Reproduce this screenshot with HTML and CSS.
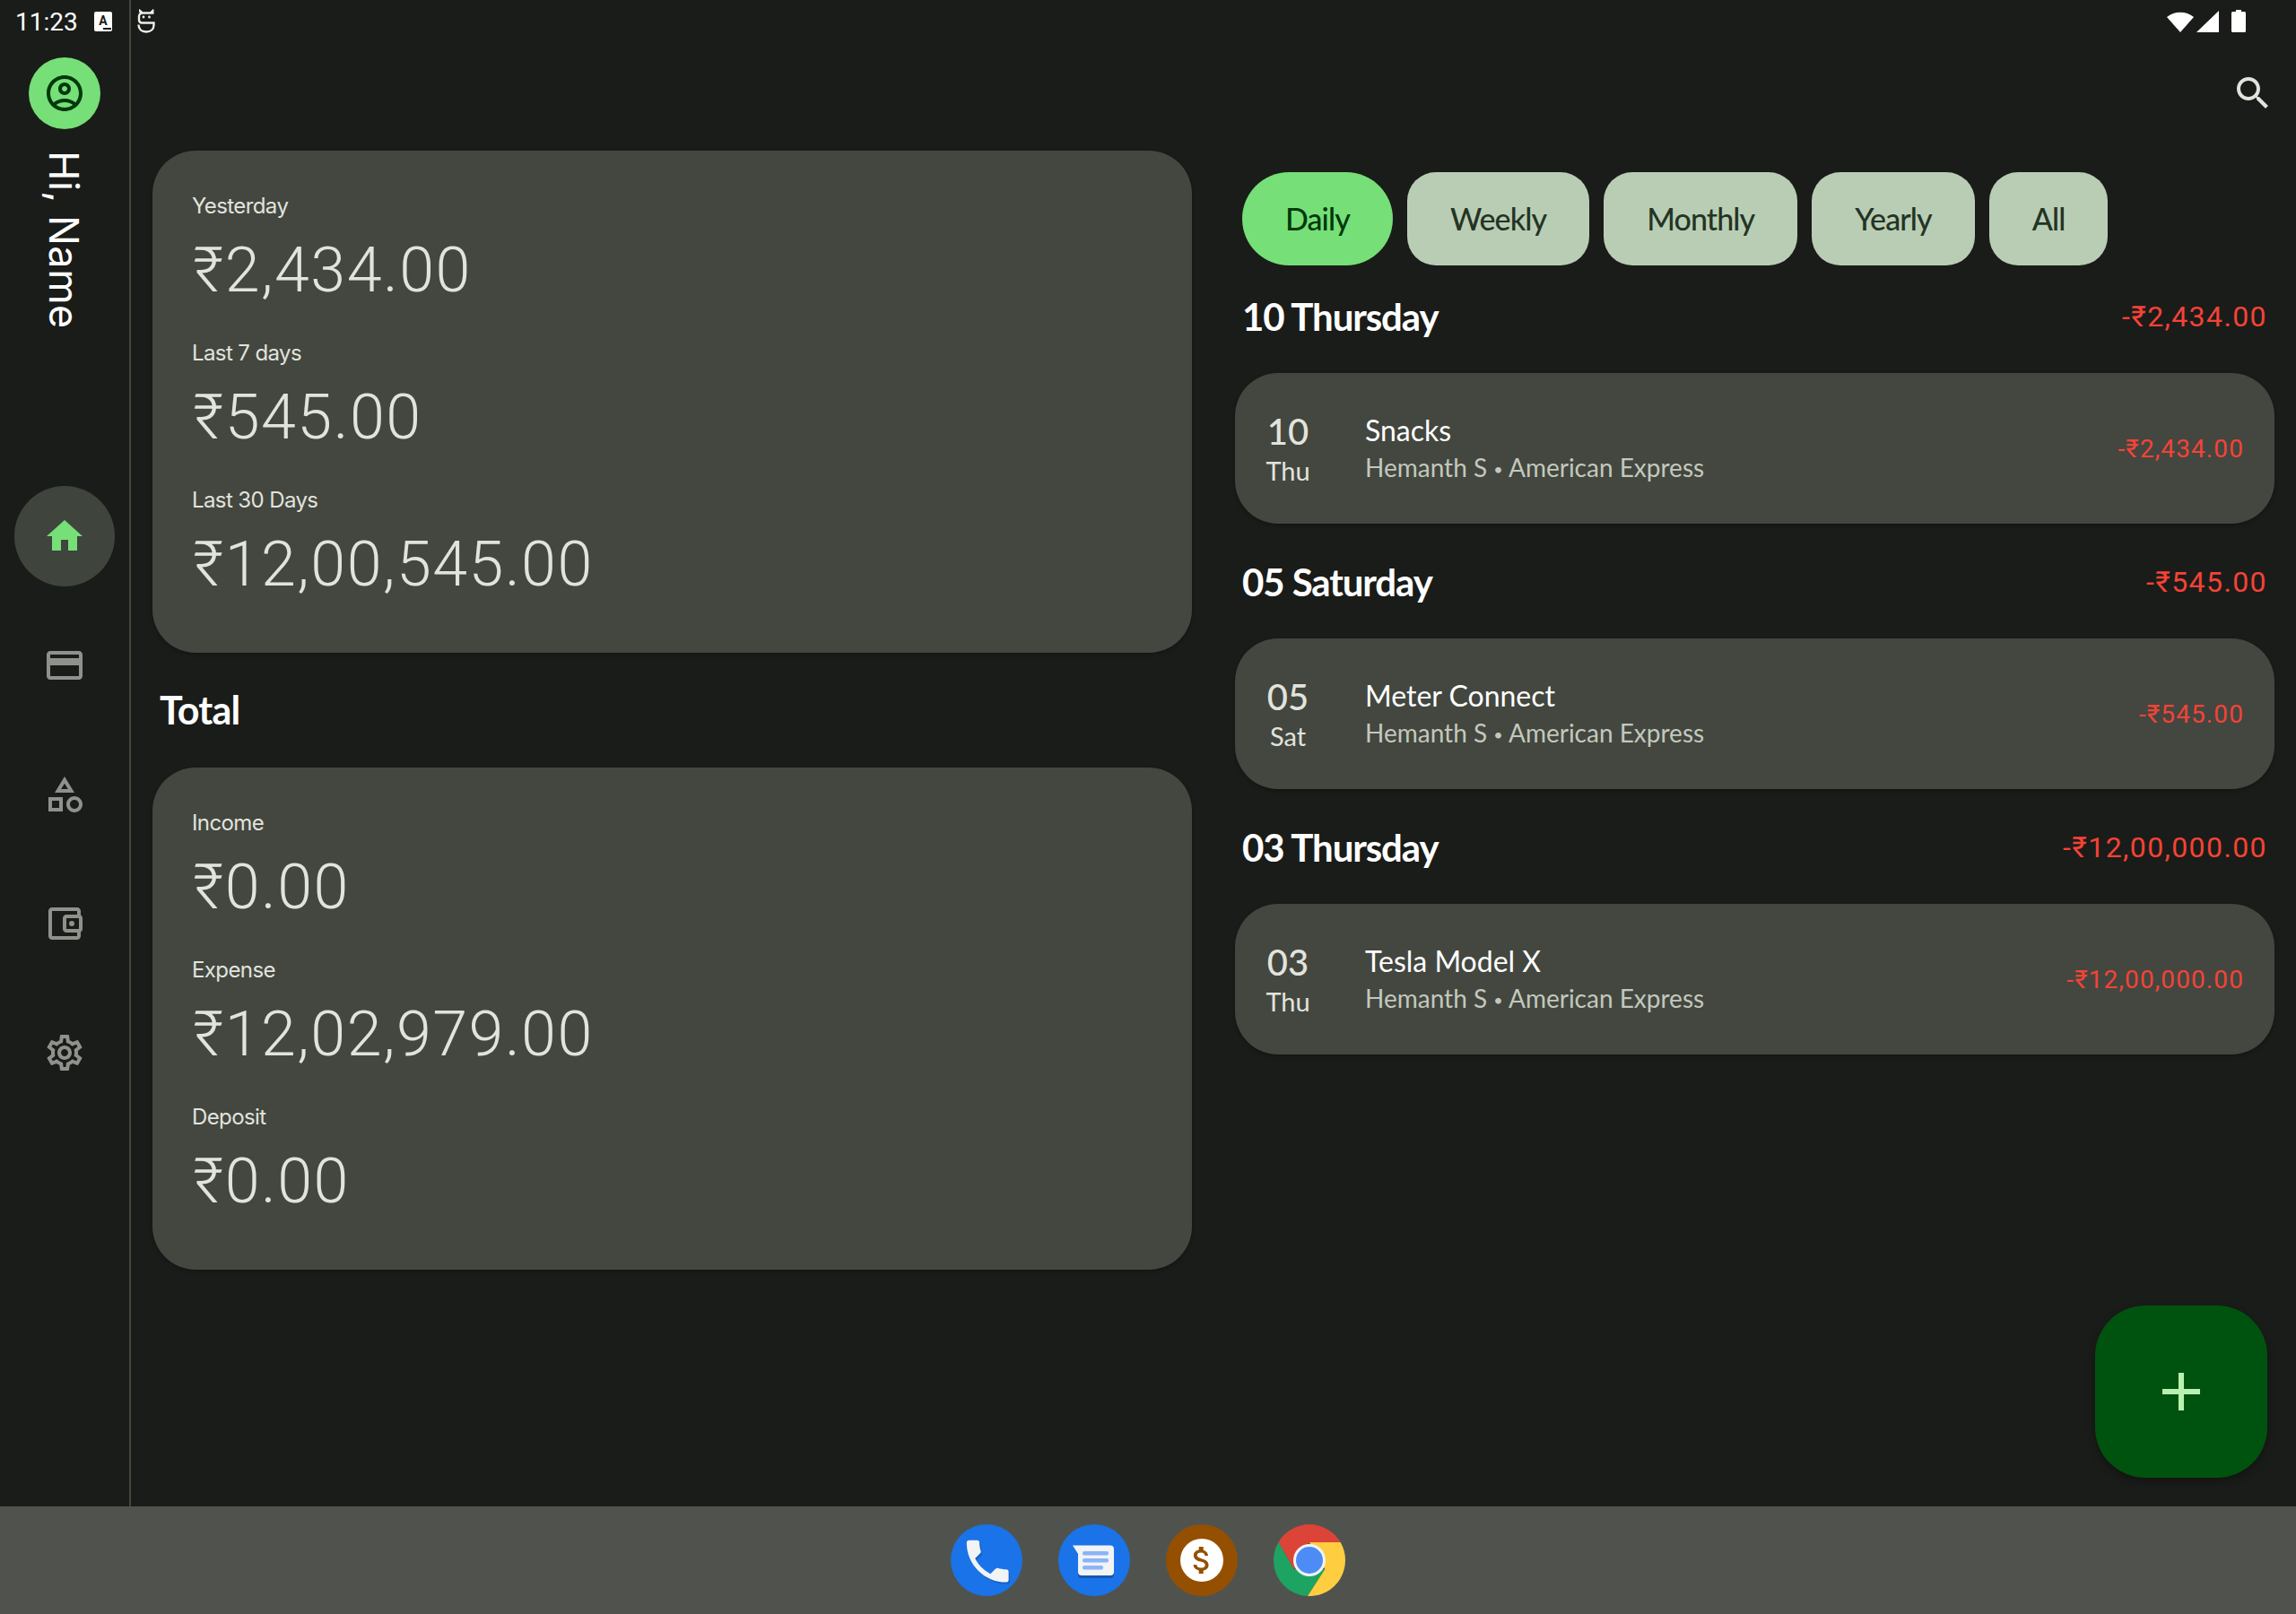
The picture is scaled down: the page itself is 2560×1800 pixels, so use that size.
FILE: index.html
```html
<!DOCTYPE html>
<html lang="en">
<head>
<meta charset="utf-8">
<title>Budget</title>
<link rel="stylesheet" href="styles.css">
</head>
<body>
<div class="screen">
  <div class="status">
    <div class="status-left">
      <span class="clock">11:23</span>
      <span class="key-icon">A<i class="dots"></i></span>
      <svg class="droid" viewBox="0 0 20 27"><path d="M18.500 4.500H6Q2 4.500 2 8.500V12Q2 15.500 5.500 15.500H18.500V18C18.500 22.500 15 25.500 10 25.500C5 25.500 1.500 22.500 1.500 17.500" fill="none" stroke="#ecece9" stroke-width="2.400"/><path d="M2.500 0.500L6 3.500H2.500ZM18 0.500L14.500 3.500H18Z" fill="#ecece9" stroke="#ecece9"/><circle cx="7" cy="9" r="1.400" fill="#ecece9"/><circle cx="13.500" cy="9" r="1.400" fill="#ecece9"/></svg>
    </div>
    <div class="status-right">
      <svg class="wifi" viewBox="0 0 30 25"><path d="M15 25L0 8A24 24 0 0 1 30 8Z" fill="#fff"/></svg>
      <svg class="signal" viewBox="0 0 25 24"><path d="M0 24L25 0V24Z" fill="#fff"/></svg>
      <svg class="battery" viewBox="0 0 16 25"><path d="M5 0H11V2H14.500A1.500 1.500 0 0 1 16 3.500V23.500A1.500 1.500 0 0 1 14.500 25H1.500A1.500 1.500 0 0 1 0 23.500V3.500A1.500 1.500 0 0 1 1.500 2H5Z" fill="#fff"/></svg>
    </div>
  </div>

  <div class="main">
    <aside class="rail">
      <div class="avatar"><svg class="icon" viewBox="0 0 24 24"><path d="M12 2C6.480 2 2 6.480 2 12s4.480 10 10 10 10-4.480 10-10S17.520 2 12 2zM7.350 18.500C8.660 17.560 10.260 17 12 17s3.340.56 4.650 1.500c-1.310.94-2.910 1.500-4.650 1.500s-3.340-.56-4.650-1.500zm10.790-1.380C16.450 15.800 14.320 15 12 15s-4.450.8-6.140 2.120C4.700 15.730 4 13.950 4 12c0-4.420 3.580-8 8-8s8 3.580 8 8c0 1.950-.7 3.730-1.860 5.120zM12 6c-1.930 0-3.500 1.570-3.500 3.500S10.070 13 12 13s3.500-1.570 3.500-3.500S13.930 6 12 6zm0 5c-.83 0-1.500-.67-1.500-1.500S11.170 8 12 8s1.500.67 1.500 1.500S12.830 11 12 11z"/></svg></div>
      <div class="greeting">Hi, Name</div>
      <nav class="rail-nav">
        <div class="rail-item active"><svg class="icon" viewBox="0 0 24 24"><path d="M10 20v-6h4v6h5v-8h3L12 3 2 12h3v8z"/></svg></div>
        <div class="rail-item"><svg class="icon" viewBox="0 0 24 24"><path d="M20 4H4c-1.110 0-1.990.89-1.990 2L2 18c0 1.110.89 2 2 2h16c1.110 0 2-.89 2-2V6c0-1.110-.89-2-2-2zm0 14H4v-6h16v6zm0-10H4V6h16v2z"/></svg></div>
        <div class="rail-item"><svg class="icon" viewBox="0 0 24 24"><path d="M12 2l-5.500 9h11L12 2zm0 3.840L13.930 9h-3.870L12 5.840zM17.500 13c-2.490 0-4.500 2.010-4.500 4.500s2.010 4.500 4.500 4.500 4.500-2.010 4.500-4.500-2.010-4.500-4.500-4.500zm0 7c-1.380 0-2.500-1.120-2.500-2.500s1.120-2.500 2.500-2.500 2.500 1.120 2.500 2.500-1.120 2.500-2.500 2.500zM3 21.500h8v-8H3v8zm2-6h4v4H5v-4z"/></svg></div>
        <div class="rail-item"><svg class="icon" viewBox="0 0 24 24"><path d="M21 7.280V5c0-1.100-.9-2-2-2H5c-1.110 0-2 .9-2 2v14c0 1.100.89 2 2 2h14c1.100 0 2-.9 2-2v-2.280c.59-.35 1-.98 1-1.720V9c0-.74-.41-1.370-1-1.720zM20 9v6h-7V9h7zM5 19V5h14v2h-6c-1.100 0-2 .9-2 2v6c0 1.100.9 2 2 2h6v2H5z"/><circle cx="16" cy="12" r="1.500"/></svg></div>
        <div class="rail-item"><svg class="icon" viewBox="0 0 24 24"><path d="M19.430 12.980c.04-.32.07-.64.07-.98 0-.34-.03-.66-.07-.98l2.110-1.650c.19-.15.24-.42.12-.64l-2-3.460c-.09-.16-.26-.25-.44-.25-.06 0-.12.01-.17.03l-2.490 1c-.52-.4-1.080-.73-1.690-.98l-.38-2.650C14.460 2.180 14.250 2 14 2h-4c-.25 0-.46.18-.49.42l-.38 2.650c-.61.25-1.170.59-1.690.98l-2.490-1c-.06-.02-.12-.03-.18-.03-.17 0-.34.09-.43.25l-2 3.460c-.13.22-.07.49.12.64l2.110 1.650c-.04.32-.07.65-.07.98 0 .33.03.66.07.98l-2.110 1.650c-.19.15-.24.42-.12.64l2 3.460c.09.16.26.25.44.25.06 0 .12-.01.17-.03l2.490-1c.52.4 1.080.73 1.690.98l.38 2.650c.03.24.24.42.49.42h4c.25 0 .46-.18.49-.42l.38-2.650c.61-.25 1.170-.59 1.690-.98l2.490 1c.06.02.12.03.18.03.17 0 .34-.09.43-.25l2-3.460c.12-.22.07-.49-.12-.64l-2.110-1.650zm-1.980-1.710c.04.31.05.52.05.73 0 .21-.02.43-.05.73l-.14 1.130.89.7 1.080.84-.7 1.210-1.270-.51-1.040-.42-.9.68c-.43.32-.84.56-1.250.73l-1.060.43-.16 1.130-.2 1.350h-1.400l-.19-1.350-.16-1.130-1.060-.43c-.43-.18-.83-.41-1.230-.71l-.91-.7-1.060.43-1.270.51-.7-1.210 1.080-.84.89-.7-.14-1.130c-.03-.31-.05-.54-.05-.74s.02-.43.05-.73l.14-1.130-.89-.7-1.080-.84.7-1.210 1.270.51 1.040.42.9-.68c.43-.32.84-.56 1.250-.73l1.060-.43.16-1.130.2-1.350h1.390l.19 1.350.16 1.130 1.060.43c.43.18.83.41 1.230.71l.91.7 1.060-.43 1.270-.51.7 1.210-1.070.85-.89.7.14 1.130zM12 8c-2.210 0-4 1.790-4 4s1.790 4 4 4 4-1.790 4-4-1.790-4-4-4zm0 6c-1.100 0-2-.9-2-2s.9-2 2-2 2 .9 2 2-.9 2-2 2z"/></svg></div>
      </nav>
    </aside>

    <div class="content">
      <div class="toolbar">
        <svg class="icon search" viewBox="0 0 24 24"><path d="M15.500 14h-.79l-.28-.27C15.410 12.590 16 11.110 16 9.500 16 5.910 13.090 3 9.500 3S3 5.910 3 9.500 5.910 16 9.500 16c1.610 0 3.090-.59 4.230-1.570l.27.28v.79l5 4.990L20.490 19l-4.990-5zm-6 0C7.010 14 5 11.990 5 9.500S7.010 5 9.500 5 14 7.010 14 9.500 11.990 14 9.500 14z"/></svg>
      </div>
      <div class="columns">
        <section class="summary">
          <div class="card">
            <div class="stat"><div class="stat-label">Yesterday</div><div class="stat-value">₹2,434.00</div></div>
            <div class="stat"><div class="stat-label">Last 7 days</div><div class="stat-value">₹545.00</div></div>
            <div class="stat"><div class="stat-label">Last 30 Days</div><div class="stat-value">₹12,00,545.00</div></div>
          </div>
          <h2 class="total-title">Total</h2>
          <div class="card">
            <div class="stat"><div class="stat-label">Income</div><div class="stat-value">₹0.00</div></div>
            <div class="stat"><div class="stat-label">Expense</div><div class="stat-value">₹12,02,979.00</div></div>
            <div class="stat"><div class="stat-label">Deposit</div><div class="stat-value">₹0.00</div></div>
          </div>
        </section>

        <section class="activity">
          <div class="chips">
            <div class="chip selected">Daily</div>
            <div class="chip">Weekly</div>
            <div class="chip">Monthly</div>
            <div class="chip">Yearly</div>
            <div class="chip">All</div>
          </div>

          <div class="group">
            <div class="group-head"><span class="group-title">10 Thursday</span><span class="group-sum">-₹2,434.00</span></div>
            <div class="tx">
              <div class="tx-date"><div class="tx-day">10</div><div class="tx-dow">Thu</div></div>
              <div class="tx-body"><div class="tx-title">Snacks</div><div class="tx-sub">Hemanth S <span class="sep">•</span> American Express</div></div>
              <div class="tx-amount">-₹2,434.00</div>
            </div>
          </div>

          <div class="group">
            <div class="group-head"><span class="group-title">05 Saturday</span><span class="group-sum">-₹545.00</span></div>
            <div class="tx">
              <div class="tx-date"><div class="tx-day">05</div><div class="tx-dow">Sat</div></div>
              <div class="tx-body"><div class="tx-title">Meter Connect</div><div class="tx-sub">Hemanth S <span class="sep">•</span> American Express</div></div>
              <div class="tx-amount">-₹545.00</div>
            </div>
          </div>

          <div class="group">
            <div class="group-head"><span class="group-title">03 Thursday</span><span class="group-sum">-₹12,00,000.00</span></div>
            <div class="tx">
              <div class="tx-date"><div class="tx-day">03</div><div class="tx-dow">Thu</div></div>
              <div class="tx-body"><div class="tx-title">Tesla Model X</div><div class="tx-sub">Hemanth S <span class="sep">•</span> American Express</div></div>
              <div class="tx-amount">-₹12,00,000.00</div>
            </div>
          </div>
        </section>
      </div>
      <button class="fab" type="button"><svg class="fab-icon" viewBox="0 0 24 24"><path d="M19 13h-6v6h-2v-6H5v-2h6V5h2v6h6v2z"/></svg></button>
    </div>
  </div>

  <footer class="dock">
    <svg class="app" viewBox="0 0 80 80"><circle cx="40" cy="40" r="40" fill="#1a73e8"/><path transform="translate(11.500 12) scale(2.600)" d="M6.620 10.790c1.440 2.830 3.760 5.140 6.590 6.590l2.200-2.200c.27-.27.67-.36 1.020-.24 1.120.37 2.330.57 3.570.57.55 0 1 .45 1 1V20c0 .55-.45 1-1 1-9.390 0-17-7.610-17-17 0-.55.45-1 1-1h3.500c.55 0 1 .45 1 1 0 1.250.2 2.450.57 3.570.11.35.03.74-.25 1.020l-2.200 2.200z" fill="#1557b0" opacity=".6"/><path transform="translate(10 10) scale(2.600)" d="M6.620 10.790c1.440 2.830 3.760 5.140 6.590 6.590l2.200-2.200c.27-.27.67-.36 1.020-.24 1.120.37 2.330.57 3.570.57.55 0 1 .45 1 1V20c0 .55-.45 1-1 1-9.390 0-17-7.610-17-17 0-.55.45-1 1-1h3.500c.55 0 1 .45 1 1 0 1.250.2 2.450.57 3.570.11.35.03.74-.25 1.020l-2.200 2.200z" fill="#f1f3f4"/></svg>
    <svg class="app" viewBox="0 0 80 80"><circle cx="40" cy="40" r="40" fill="#1a73e8"/><path d="M18 26H58A4 4 0 0 1 62 30V56A4 4 0 0 1 58 60H26A4 4 0 0 1 22 56V34Z" fill="#1557b0"/><path d="M16 23.500H58A4 4 0 0 1 62 27.500V53A4 4 0 0 1 58 57H26A4 4 0 0 1 22 53V33Z" fill="#f1f3f4"/><rect x="27" y="30" width="29" height="4.500" rx="2" fill="#8ab4f8"/><rect x="27" y="38" width="29" height="4.500" rx="2" fill="#8ab4f8"/><rect x="27" y="46" width="23" height="4.500" rx="2" fill="#8ab4f8"/></svg>
    <svg class="app" viewBox="0 0 80 80"><circle cx="40" cy="40" r="40" fill="#954f00"/><circle cx="40" cy="40" r="24" fill="#fff"/><path transform="translate(20 20) scale(1.670)" d="M11.800 10.900c-2.270-.59-3-1.200-3-2.150 0-1.090 1.010-1.850 2.700-1.850 1.780 0 2.440.85 2.500 2.100h2.210c-.07-1.720-1.120-3.300-3.210-3.810V3h-3v2.160c-1.940.42-3.500 1.680-3.500 3.610 0 2.310 1.910 3.460 4.700 4.130 2.500.6 3 1.480 3 2.410 0 .69-.49 1.790-2.700 1.790-2.060 0-2.870-.92-2.980-2.100h-2.200c.12 2.190 1.760 3.420 3.680 3.830V21h3v-2.150c1.950-.37 3.500-1.500 3.500-3.550 0-2.840-2.430-3.810-4.700-4.400z" fill="#954f00"/></svg>
    <svg class="app" viewBox="0 0 80 80"><path d="M5.400 20A40 40 0 0 1 74.600 20H40L22.700 50Z" fill="#db4437"/><path d="M5.400 20A40 40 0 0 0 38 80L57.300 50H22.700Z" fill="#1da462"/><path d="M74.600 20A40 40 0 0 1 38 80L57.300 50L40 20Z" fill="#ffcd40"/><circle cx="40" cy="40" r="18" fill="#f1f3f4"/><circle cx="40" cy="40" r="15" fill="#4e8cf5"/></svg>
  </footer>
</div>
</body>
</html>
```

FILE: styles.css
```css
* { box-sizing: border-box; }
html, body { margin: 0; padding: 0; }
body { width: 2560px; height: 1800px; background: #1a1c19; color: #e2e3dd; font-family: Roboto, "Liberation Sans", sans-serif; overflow: hidden; }
.screen { position: relative; width: 2560px; height: 1800px; display: flex; flex-direction: column; }

.status { position: absolute; top: 0; left: 0; right: 0; height: 48px; display: flex; justify-content: space-between; align-items: flex-start; z-index: 2; }
.status-left { display: flex; align-items: flex-start; padding-left: 17px; }
.clock { font-size: 28px; line-height: 50px; color: #fff; width: 88px; }
.key-icon { position: relative; width: 20px; height: 22px; margin-top: 13px; background: #fff; color: #1a1c19; border-radius: 2px; font-size: 14px; font-weight: 700; line-height: 20px; text-align: center; }
.dots { position: absolute; right: 1px; bottom: 2px; width: 9px; height: 2px; background: #1a1c19; }
.droid { width: 20px; height: 27px; margin: 10px 0 0 28px; }
.status-right { display: flex; align-items: flex-start; padding: 11px 56px 0 0; }
.wifi { width: 30px; height: 25px; }
.signal { width: 25px; height: 24px; margin: 1px 0 0 3px; }
.battery { width: 16px; height: 25px; margin-left: 14px; }

.main { position: relative; flex: none; height: 1680px; display: flex; }
.rail { flex: none; width: 146px; border-right: 2px solid #43483f; padding-top: 64px; display: flex; flex-direction: column; align-items: center; }
.avatar { width: 80px; height: 80px; border-radius: 50%; background: #76df78; display: flex; align-items: center; justify-content: center; fill: #00390a; }
.icon { width: 48px; height: 48px; display: block; }
.greeting { writing-mode: vertical-rl; height: 374px; margin-top: 24px; padding-right: 3px; font-size: 45px; letter-spacing: .5px; line-height: 56px; color: #fff; font-family: Inter, sans-serif; }
.rail-nav { display: flex; flex-direction: column; gap: 32px; }
.rail-item { width: 112px; height: 112px; border-radius: 50%; display: flex; align-items: center; justify-content: center; fill: #8f928c; }
.rail-item.active { background: #3f443d; fill: #76df78; }

.content { flex: 1; min-width: 0; }
.toolbar { height: 168px; padding: 80px 24px 0 0; display: flex; justify-content: flex-end; align-items: flex-start; }
.search { fill: #e2e3dd; }
.columns { display: grid; grid-template-columns: 1fr 1fr; gap: 48px; padding: 0 24px; }
.card { height: 560px; background: #434740; border-radius: 48px; padding: 34px 44px 0; box-shadow: 0 2px 4px rgba(0,0,0,.25); }
.stat { margin-bottom: 28px; }
.stat-label { height: 56px; font-family: Inter, sans-serif; font-size: 24px; letter-spacing: -.6px; line-height: 56px; color: #e2e3dd; }
.stat-value { height: 80px; padding: 3px 0 0 1px; font-size: 70px; font-weight: 300; letter-spacing: 1.500px; line-height: 80px; color: #e2e3dd; }
.total-title { margin: 0; height: 128px; padding-left: 8px; font-family: Lato, sans-serif; font-size: 43px; letter-spacing: -.8px; font-weight: 700; line-height: 128px; color: #fff; }

.activity { padding-top: 24px; }
.chips { display: flex; gap: 16px; padding-left: 8px; }
.chip { height: 104px; width: auto; padding: 0 48px; border-radius: 32px; background: #b9cdb5; color: #243424; font-family: Lato, sans-serif; font-size: 34px; letter-spacing: -.9px; font-weight: 500; line-height: 104px; }
.chip.selected { background: #76df78; color: #00390a; border-radius: 52px; }
.group + .group { margin-top: 8px; }
.group-head { height: 120px; padding: 0 8px; display: flex; justify-content: space-between; align-items: center; padding-bottom: 6px; }
.group-title { font-family: Lato, sans-serif; font-size: 42px; letter-spacing: -1.100px; font-weight: 700; color: #fff; }
.group-sum { font-size: 32px; letter-spacing: 1.400px; font-weight: 400; color: #f44336; }
.tx { height: 168px; background: #434740; border-radius: 48px; display: flex; align-items: center; padding: 0 34px 0 20px; box-shadow: 0 2px 4px rgba(0,0,0,.25); }
.tx-date { width: 78px; text-align: center; margin-right: 47px; padding-top: 6px; }
.tx-day { font-family: Lato, sans-serif; font-size: 40px; font-weight: 500; line-height: 43px; color: #e2e3dd; }
.tx-dow { font-family: Lato, sans-serif; font-size: 29px; line-height: 43px; color: #e2e3dd; }
.tx-body { flex: 1; padding-top: 2px; }
.tx-title { font-family: Lato, sans-serif; font-size: 32px; line-height: 43px; color: #fff; }
.tx-sub { font-family: Lato, sans-serif; font-size: 28px; line-height: 41px; color: #c3c8bc; }
.sep { font-size: 18px; vertical-align: 2px; }
.tx-amount { font-size: 28px; letter-spacing: 1.100px; font-weight: 400; color: #f44336; }

.fab { position: absolute; right: 32px; bottom: 32px; width: 192px; height: 192px; border: 0; padding: 0; border-radius: 56px; background: #00530f; display: flex; align-items: center; justify-content: center; box-shadow: 0 4px 10px rgba(0,0,0,.3); }
.fab-icon { width: 72px; height: 72px; fill: #b9f0b0; }

.dock { flex: none; height: 120px; background: #50534d; display: flex; justify-content: center; align-items: center; gap: 40px; }
.app { width: 80px; height: 80px; display: block; }
```
